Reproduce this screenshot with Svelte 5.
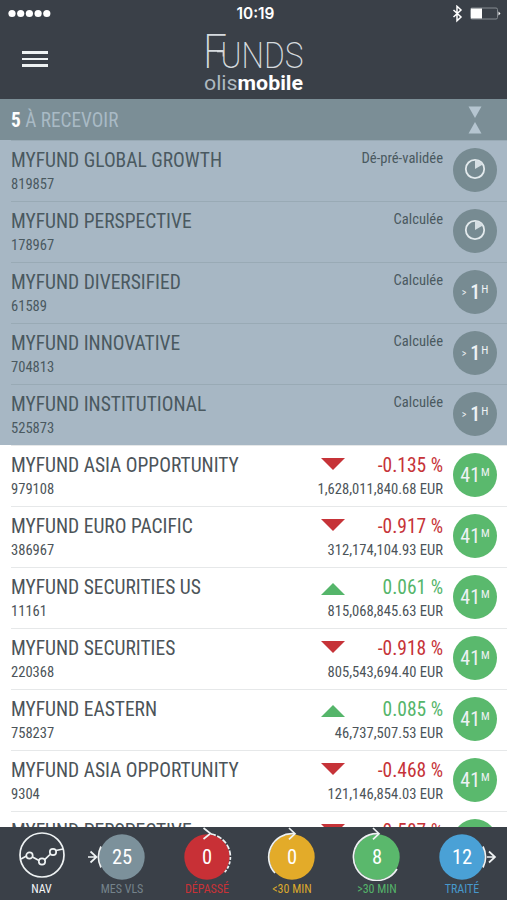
<script lang="ts">
	interface PendingFund {
		name: string;
		code: string;
		status: string;
		late: boolean;
	}

	interface Fund {
		name: string;
		code?: string;
		change: string;
		amount?: string;
	}

	interface Tab {
		id: string;
		label: string;
		count?: number;
		color: string;
		fill?: string;
	}

	const pending: PendingFund[] = [
		{ name: 'MYFUND GLOBAL GROWTH', code: '819857', status: 'Dé-pré-validée', late: false },
		{ name: 'MYFUND PERSPECTIVE', code: '178967', status: 'Calculée', late: false },
		{ name: 'MYFUND DIVERSIFIED', code: '61589', status: 'Calculée', late: true },
		{ name: 'MYFUND INNOVATIVE', code: '704813', status: 'Calculée', late: true },
		{ name: 'MYFUND INSTITUTIONAL', code: '525873', status: 'Calculée', late: true }
	];

	const funds: Fund[] = [
		{ name: 'MYFUND ASIA OPPORTUNITY', code: '979108', change: '-0.135', amount: '1,628,011,840.68' },
		{ name: 'MYFUND EURO PACIFIC', code: '386967', change: '-0.917', amount: '312,174,104.93' },
		{ name: 'MYFUND SECURITIES US', code: '11161', change: '0.061', amount: '815,068,845.63' },
		{ name: 'MYFUND SECURITIES', code: '220368', change: '-0.918', amount: '805,543,694.40' },
		{ name: 'MYFUND EASTERN', code: '758237', change: '0.085', amount: '46,737,507.53' },
		{ name: 'MYFUND ASIA OPPORTUNITY', code: '9304', change: '-0.468', amount: '121,146,854.03' },
		{ name: 'MYFUND PERSPECTIVE', change: '-0.587' }
	];

	const tabs: Tab[] = [
		{ id: 'nav', label: 'NAV', color: '#f4f6f7' },
		{ id: 'mine', label: 'MES VLS', count: 25, color: '#75838b', fill: '#7c919b' },
		{ id: 'over', label: 'DÉPASSÉ', count: 0, color: '#c93237', fill: '#c83036' },
		{ id: 'under30', label: '<30 MIN', count: 0, color: '#dba92d', fill: '#e3ab29' },
		{ id: 'over30', label: '>30 MIN', count: 8, color: '#55b36a', fill: '#5ab86c' },
		{ id: 'done', label: 'TRAITÉ', count: 12, color: '#4798cb', fill: '#4aa1d6' }
	];
</script>

<div class="app">
	<header class="header">
		<div class="status-bar">
			<svg class="signal" width="44" height="10" viewBox="0 0 44 10" fill="#fff">
				{#each [0, 1, 2, 3, 4] as i}
					<circle cx={4 + i * 8.7} cy="4.5" r="3.6" />
				{/each}
			</svg>
			<span class="time">10:19</span>
			<svg class="power" width="50" height="18" viewBox="0 0 50 18" fill="none">
				<path d="M2.5 5l7.5 7-4 3.7V1.3l4 3.7-7.5 7" stroke="#fff" stroke-width="1.5" />
				<rect x="19.5" y="3" width="27" height="11" rx="1.5" stroke="#858b91" />
				<rect x="20" y="3.5" width="11" height="10" fill="#fff" />
				<path d="M47.5 6.5v4l2-2z" fill="#fff" />
			</svg>
		</div>
		<div class="title-bar">
			<button class="menu" aria-label="Menu">
				<span></span>
				<span></span>
				<span></span>
			</button>
			<svg class="logo" width="106" height="66" viewBox="0 0 106 66">
				<text class="logo-thin" x="2" y="41" font-size="48.5" textLength="24" lengthAdjust="spacingAndGlyphs">F</text>
				<path d="M16 24.500h6.300v5" fill="none" stroke="#d5dade" stroke-width="1.300" />
				<text class="logo-thin" x="19.5" y="41" font-size="36.5" textLength="83" lengthAdjust="spacingAndGlyphs">UNDS</text>
				<text class="logo-sub" x="3" y="62.5" textLength="99" lengthAdjust="spacingAndGlyphs"><tspan fill="#aeb9c0">olis</tspan><tspan font-weight="700">mobile</tspan></text>
			</svg>
		</div>
	</header>

	<div class="section-bar">
		<span><b>5</b> À RECEVOIR</span>
		<svg width="14" height="28" viewBox="0 0 14 28" fill="#b5c5d0">
			<path d="M.5.5h13L7 12z" />
			<path d="M7 16l6.5 11.5H.5z" />
		</svg>
	</div>

	<main class="list">
		{#each pending as fund}
			<div class="row pending">
				<div class="fund">
					<div class="name">{fund.name}</div>
					<div class="code">{fund.code}</div>
				</div>
				<div class="status">{fund.status}</div>
				<div class="badge">
					{#if fund.late}
						<small class="gt">&gt;</small><b>1</b><sup>H</sup>
					{:else}
						<svg width="22" height="22" viewBox="0 0 22 22">
							<circle cx="11" cy="11" r="9.2" fill="none" stroke="#e3eaed" stroke-width="1.8" />
							<path d="M11 11V2a9 9 0 0 1 7.8 4.5z" fill="#d5dee3" />
						</svg>
					{/if}
				</div>
			</div>
		{/each}
		{#each funds as fund}
			{@const down = fund.change.startsWith('-')}
			<div class="row">
				<div class="fund">
					<div class="name">{fund.name}</div>
					{#if fund.code}
						<div class="code">{fund.code}</div>
					{/if}
				</div>
				<div class="figures">
					<div class="change" class:down>
						<svg width="24" height="12" viewBox="0 0 24 12" fill="currentColor">
							<path d={down ? 'M0 0h24L12 12z' : 'M12 0l12 12H0z'} />
						</svg>
						<span>{fund.change} %</span>
					</div>
					{#if fund.amount}
						<div class="amount">{fund.amount} EUR</div>
					{/if}
				</div>
				<div class="badge live">41<sup>M</sup></div>
			</div>
		{/each}
	</main>

	<nav class="tabs">
		{#each tabs as tab}
			<button class="tab" style="color: {tab.color}">
				<svg width="76" height="54" viewBox="-38 -30 76 54" fill="none" stroke="#eef2f3" stroke-width="1.7">
					{#if tab.fill}
						<circle r="22.7" fill={tab.fill} stroke="none" />
					{/if}
					{#if tab.id === 'nav'}
						<circle cy="-2" r="22" />
						<path d="M-21 2l5.5-3M-9.5 0l6.500 3.500M2.700 2.700 8-2.500M14-6.500l7-1.500" />
						<circle cx="-12.5" cy="-1.5" r="3.2" />
						<circle cx="0" cy="4.5" r="3.2" />
						<circle cx="11" cy="-5" r="3.2" />
					{:else if tab.id === 'mine'}
						<path d="M-21-10.5A23.5 23.5 0 0 0-21 10.5" />
						<path d="M-34 0h8M-31.5-5.5l6 5.5-6 5.5" />
					{:else if tab.id === 'over'}
						<path d="M4-23A23.4 23.4 0 0 1 23.4 0" stroke-dasharray="5 1.5" />
						<path d="M23.4 0A23.4 23.4 0 0 1 17 16" stroke-dasharray="3 1.5" />
						<path d="M-3.5-29l7 5.5-7 5.5" />
					{:else if tab.id === 'under30'}
						<path d="M-17 16A23.4 23.4 0 0 1 2-23.3" />
						<path d="M-3-29l6 5.700-6 5.700" />
					{:else if tab.id === 'over30'}
						<path d="M20 12A23.4 23.4 0 1 1 1-23.3" />
						<path d="M-4-29l6 5.700-6 5.700" />
					{:else}
						<path d="M21-10.5A23.5 23.5 0 0 1 21 10.5" />
						<path d="M25 0h8M27-5.5l6 5.5-6 5.5" />
					{/if}
					{#if tab.count !== undefined}
						<text class="count" y="6.5" text-anchor="middle">{tab.count}</text>
					{/if}
				</svg>
				<span>{tab.label}</span>
			</button>
		{/each}
	</nav>
</div>

<style>
	:global(body) {
		margin: 0;
	}

	.app {
		width: 507px;
		height: 900px;
		display: flex;
		flex-direction: column;
		overflow: hidden;
		background: #fff;
		color: #4c5459;
		font-family: 'Roboto Condensed', Roboto, sans-serif;
		font-stretch: 75%;
	}

	button {
		padding: 0;
		border: none;
		background: none;
		font: inherit;
	}

	.header {
		height: 99px;
		flex: none;
		background: #3a4048;
		color: #fff;
	}

	.status-bar {
		height: 27px;
		display: grid;
		grid-template-columns: 1fr auto 1fr;
		align-items: center;
		padding: 0 6px 0 8px;
	}

	.time {
		margin-left: 2px;
		font: 600 15.4px Inter, sans-serif;
	}

	.power {
		justify-self: end;
	}

	.title-bar {
		display: grid;
		grid-template-columns: 1fr auto 1fr;
		align-items: start;
	}

	.menu {
		display: flex;
		flex-direction: column;
		gap: 4px;
		width: 26px;
		margin: 24px 0 0 22px;
	}

	.menu span {
		height: 2.5px;
		background: #eef2f3;
	}

	.logo {
		overflow: visible;
		font-stretch: 100%;
	}

	.logo-thin {
		font-family: Roboto, sans-serif;
		font-weight: 200;
		fill: #d5dade;
	}

	.logo-sub {
		font-family: Roboto, sans-serif;
		font-size: 20px;
		fill: #fff;
	}

	.section-bar {
		height: 41px;
		flex: none;
		box-sizing: border-box;
		display: flex;
		align-items: center;
		justify-content: space-between;
		padding: 1px 25px 0 11px;
		background: #7b8e96;
		color: #a9bac5;
		font-size: 19.3px;
	}

	.section-bar b {
		color: #fff;
	}

	.list {
		flex: 1;
		min-height: 0;
		overflow: hidden;
	}

	.row {
		height: 61px;
		box-sizing: border-box;
		display: flex;
		padding: 8px 10px 0 11px;
		background: linear-gradient(#e6e8e9, #e6e8e9) 11px 0 / 100% 1px no-repeat #fff;
	}

	.row.pending {
		background: linear-gradient(#99aab5, #99aab5) 11px 0 / 100% 1px no-repeat #a7b7c4;
	}

	.fund {
		flex: 1;
		padding-top: 1px;
	}

	.name {
		font-size: 19.5px;
		line-height: 24px;
	}

	.code,
	.amount {
		font-size: 14.6px;
		line-height: 22px;
	}

	.pending .fund,
	.status {
		color: #4a5960;
	}

	.status {
		font-size: 14.6px;
		line-height: 20px;
	}

	.figures {
		width: 126px;
		padding-top: 1px;
	}

	.change {
		display: flex;
		justify-content: space-between;
		margin-left: 4px;
		font-size: 19.5px;
		line-height: 24px;
		color: #55b56a;
	}

	.change svg {
		margin-top: 7px;
	}

	.change.down svg {
		margin-top: 4px;
	}

	.change.down {
		color: #c63338;
	}

	.amount {
		display: flex;
		justify-content: flex-end;
		white-space: nowrap;
	}

	.badge {
		width: 44px;
		height: 44px;
		flex: none;
		display: flex;
		align-items: center;
		justify-content: center;
		margin: 0.3px 0 0 10px;
		border-radius: 50%;
		background: #778b92;
		color: #eef2f4;
		font-size: 20px;
	}

	.badge svg {
		margin-bottom: 3px;
	}

	.badge b {
		font-weight: 500;
	}

	.badge sup {
		align-self: flex-start;
		margin: 13px 0 0 1px;
		font-size: 11.5px;
		line-height: 13px;
	}

	.badge .gt {
		margin-right: 4px;
		font-size: 10px;
	}

	.badge.live {
		background: #5ab96d;
	}

	.tabs {
		height: 73px;
		flex: none;
		display: grid;
		grid-template-columns: 76px repeat(5, 85px);
		padding-left: 3.5px;
		background: #3a4048;
	}

	.tab {
		display: flex;
		flex-direction: column;
		align-items: center;
		font-size: 12px;
		line-height: 14px;
	}

	.count {
		font-size: 20.5px;
		fill: #fff;
		stroke: none;
	}

	.tab span {
		margin-top: 1px;
	}
</style>
